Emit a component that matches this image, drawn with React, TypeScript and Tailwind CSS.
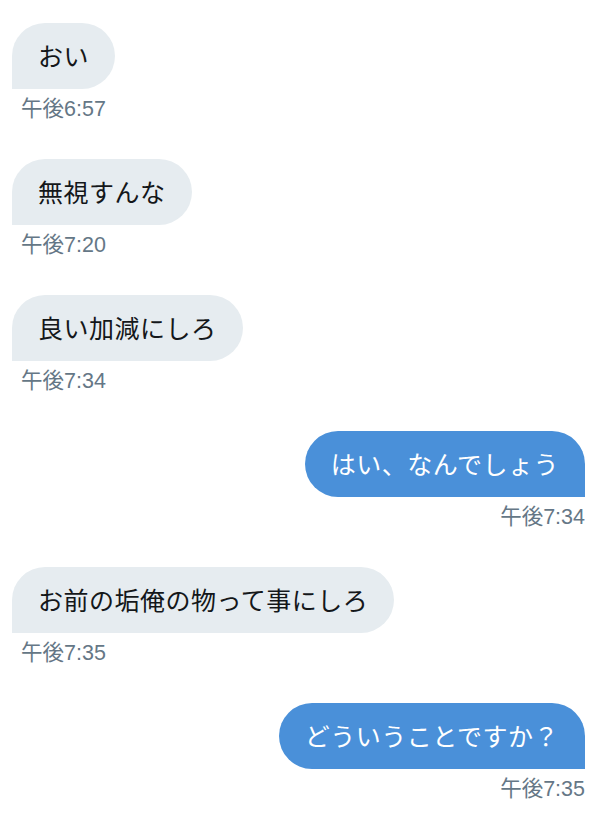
import React from "react";

type Msg = { text: string; time: string; me: boolean };

const msgs: Msg[] = [
  { text: "おい", time: "午後6:57", me: false },
  { text: "無視すんな", time: "午後7:20", me: false },
  { text: "良い加減にしろ", time: "午後7:34", me: false },
  { text: "はい、なんでしょう", time: "午後7:34", me: true },
  { text: "お前の垢俺の物って事にしろ", time: "午後7:35", me: false },
  { text: "どういうことですか？", time: "午後7:35", me: true },
];

export default function App() {
  return (
    <div
      className="w-[600px] h-[828px] bg-white pt-[23px] overflow-hidden"
      style={{ fontFamily: '"Noto Sans CJK JP", "Noto Sans", sans-serif' }}
    >
      {msgs.map((m, i) =>
        m.me ? (
          <div key={i} className="flex flex-col items-end pr-[15px] mb-[38px]">
            <div className="h-[66px] flex items-center px-[26px] bg-[#4a90d9] text-white text-[25px] tracking-[0.5px] rounded-tl-[33px] rounded-tr-[33px] rounded-bl-[33px] rounded-br-none whitespace-nowrap">
              {m.text}
            </div>
            <div
              className="mt-[8px] h-[24px] leading-[24px] text-[21.5px] text-[#657786]"
              style={{ fontFamily: '"Liberation Sans", "Noto Sans CJK JP", sans-serif' }}
            >
              {m.time}
            </div>
          </div>
        ) : (
          <div key={i} className="flex flex-col items-start pl-[12px] mb-[38px]">
            <div className="h-[66px] flex items-center px-[26px] bg-[#e6ecf0] text-[#14171a] text-[25px] tracking-[0.5px] rounded-tl-[33px] rounded-tr-[33px] rounded-br-[33px] rounded-bl-none whitespace-nowrap">
              {m.text}
            </div>
            <div
              className="mt-[8px] h-[24px] leading-[24px] text-[21.5px] text-[#657786] pl-[9px]"
              style={{ fontFamily: '"Liberation Sans", "Noto Sans CJK JP", sans-serif' }}
            >
              {m.time}
            </div>
          </div>
        )
      )}
    </div>
  );
}
